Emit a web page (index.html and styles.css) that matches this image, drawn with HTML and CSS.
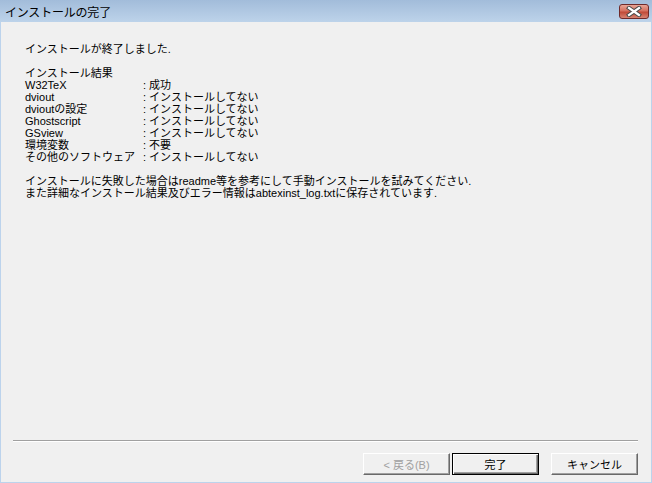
FILE: index.html
```html
<!DOCTYPE html>
<html lang="ja">
<head>
    <meta charset="UTF-8">
    <title>インストールの完了</title>
    <link rel="stylesheet" href="styles.css">
</head>
<body>
    <div class="window">
        <div class="titlebar">
            <div class="title">インストールの完了</div>
            <div class="close">
                <svg width="16" height="11" viewBox="0 0 16 11">
                    <path d="M3 2 L13 9 M13 2 L3 9" stroke="#4a4a4a" stroke-width="4.2" stroke-linecap="square"/>
                    <path d="M3 2 L13 9 M13 2 L3 9" stroke="#ffffff" stroke-width="2.2" stroke-linecap="square"/>
                </svg>
            </div>
        </div>
        <div class="client">
            <div class="content">
                <p class="line">インストールが終了しました.</p>
                <p class="line gap">インストール結果</p>
                <div class="results">
                    <span>W32TeX</span><span>: 成功</span>
                    <span>dviout</span><span>: インストールしてない</span>
                    <span>dvioutの設定</span><span>: インストールしてない</span>
                    <span>Ghostscript</span><span>: インストールしてない</span>
                    <span>GSview</span><span>: インストールしてない</span>
                    <span>環境変数</span><span>: 不要</span>
                    <span>その他のソフトウェア</span><span>: インストールしてない</span>
                </div>
                <p class="line gap">インストールに失敗した場合はreadme等を参考にして手動インストールを試みてください.</p>
                <p class="line">また詳細なインストール結果及びエラー情報はabtexinst_log.txtに保存されています.</p>
            </div>
            <div class="footer">
                <div class="separator"></div>
                <div class="buttons">
                    <button class="btn" disabled>&lt; 戻る(B)</button>
                    <button class="btn default">完了</button>
                    <button class="btn cancel">キャンセル</button>
                </div>
            </div>
        </div>
    </div>
</body>
</html>
```

FILE: styles.css
```css
body {
    margin: 0;
    font-family: "Liberation Sans", "Noto Sans CJK JP", sans-serif;
    font-size: 11px;
    color: #000000;
}

.window {
    width: 652px;
    height: 483px;
    background-color: #bcd3ec;
    display: flex;
    flex-direction: column;
    box-sizing: border-box;
    padding: 0 1px 1px 1px;
}

.titlebar {
    height: 22px;
    display: flex;
    align-items: center;
    justify-content: space-between;
    background: linear-gradient(#a2bcda, #bdd3ea);
    margin: 0 -1px;
    padding: 0 3px 0 5px;
}

.title {
    font-size: 12px;
    letter-spacing: -0.2px;
    color: #000000;
}

.close {
    width: 28px;
    height: 13px;
    border: 1px solid #6f2a2a;
    border-radius: 3px;
    background: linear-gradient(#e8a597, #d4705f 45%, #c04a38 55%, #d78372);
    display: flex;
    align-items: center;
    justify-content: center;
    margin-top: 1px;
}

.client {
    flex: 1;
    background-color: #f0f0f0;
    display: flex;
    flex-direction: column;
}

.content {
    flex: 1;
    padding: 21px 0 0 24px;
    line-height: 12px;
}

.line {
    margin: 0;
    white-space: nowrap;
}

.gap {
    margin-top: 12px;
}

.results {
    display: grid;
    grid-template-columns: 118px auto;
    white-space: nowrap;
}

.footer {
    padding: 0 13px 7px 12px;
}

.separator {
    border-top: 1px solid #a0a0a0;
    border-bottom: 1px solid #ffffff;
}

.buttons {
    display: flex;
    justify-content: flex-end;
    margin-top: 11px;
}

.btn {
    width: 87px;
    height: 22px;
    font-family: "Liberation Sans", "Noto Sans CJK JP", sans-serif;
    font-size: 11px;
    color: #000000;
    background-color: #f0f0f0;
    border: 1px solid;
    border-color: #ffffff #696969 #696969 #ffffff;
    box-shadow: inset -1px -1px #a0a0a0;
    padding: 0;
    margin-left: 2px;
}

.btn:disabled {
    color: #a0a0a0;
}

.btn.default {
    border: 1px solid #000000;
    box-shadow: inset 1px 1px #ffffff, inset -1px -1px #696969, inset -2px -2px #a0a0a0;
}

.btn.cancel {
    margin-left: 12px;
}
```
